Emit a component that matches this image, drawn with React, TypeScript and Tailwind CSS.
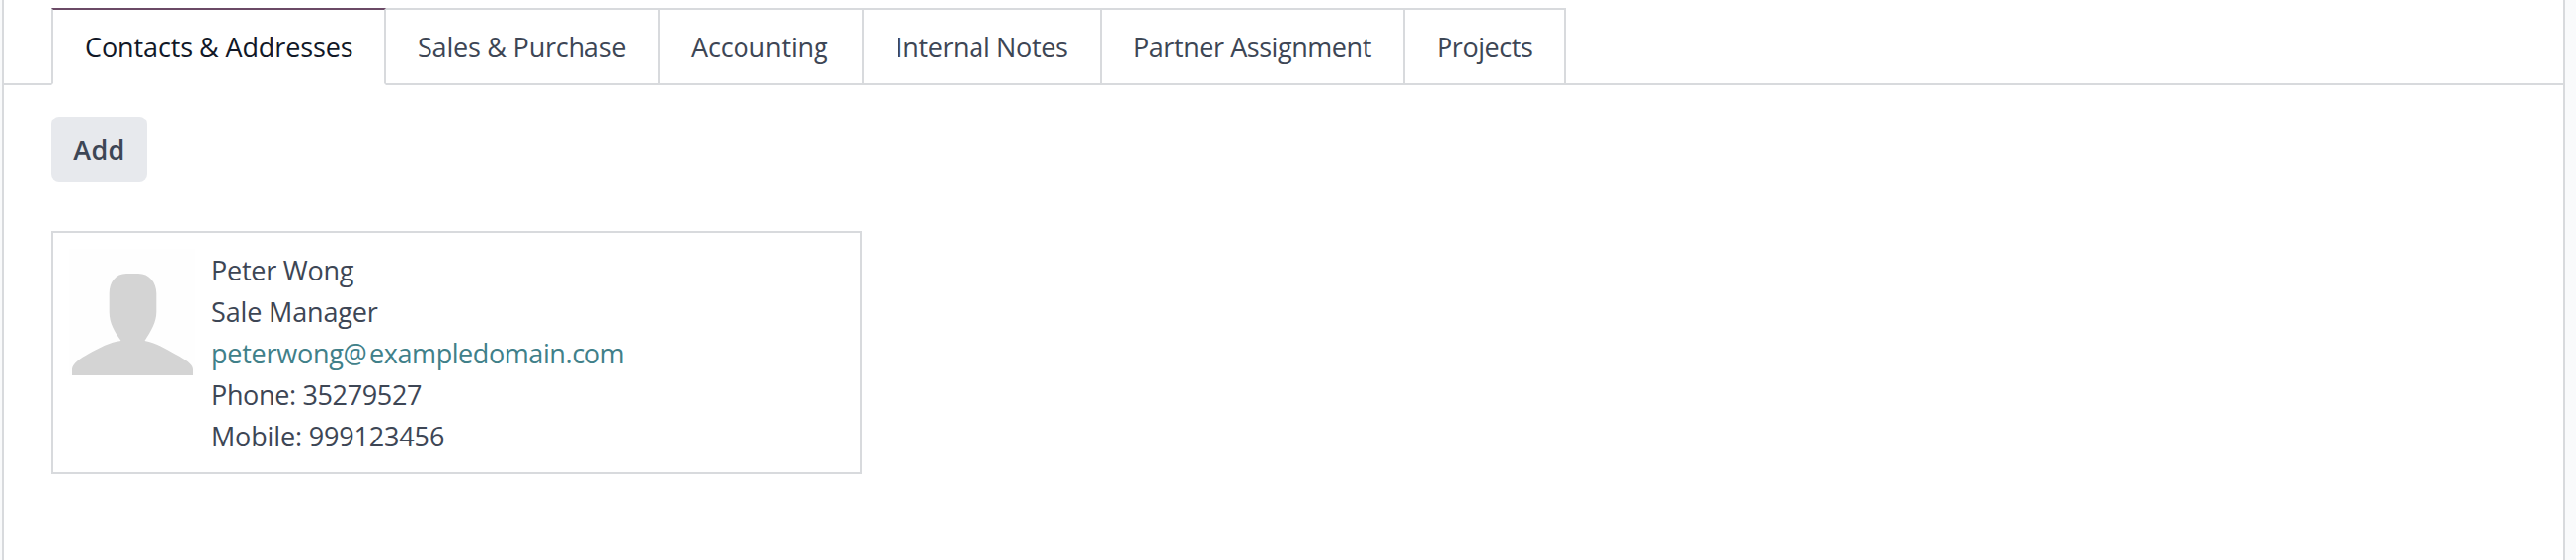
type Tab = { label: string; className: string; active?: boolean };

const tabs: Tab[] = [
  { label: "Contacts & Addresses", className: "w-[339px] tracking-[-0.1px]", active: true },
  { label: "Sales & Purchase", className: "w-[277px] tracking-[-0.216px]" },
  { label: "Accounting", className: "w-[207px] tracking-[-0.144px]" },
  { label: "Internal Notes", className: "w-[241px] tracking-[-0.359px]" },
  { label: "Partner Assignment", className: "w-[307px] tracking-[-0.443px]" },
  { label: "Projects", className: "w-[163px] tracking-[-0.45px]" },
];

function TabItem({ label, className, active }: Tab) {
  const tone = active
    ? "border-2 border-t-[#6b4a66] border-x-[#d8dadd] border-b-white bg-white text-[#111827]"
    : "border-y-2 border-r-2 border-[#d8dadd]";
  return (
    <button
      role="tab"
      aria-selected={!!active}
      className={`box-border h-[78px] shrink-0 whitespace-nowrap pt-0.5 pl-8 text-left ${tone} ${className}`}
    >
      {label}
    </button>
  );
}

function Avatar() {
  return (
    <svg className="h-32 w-32 shrink-0" viewBox="0 0 128 128" aria-hidden="true">
      <rect width="128" height="128" fill="#fefefe" />
      <path
        d="M58 25H70C81 25 88.3 34 88.3 45V64C88.3 74 83 83 76.5 93C88 95 97 101 108 107C117 112 125 116.500 125 122V128H3V122C3 116.500 11 111 20 106C31 100 41 94.500 52.500 93C46 84 40.700 75 40.700 64V45C40.700 34 47 25 58 25Z"
        fill="#d4d4d4"
      />
    </svg>
  );
}

function ContactCard() {
  return (
    <article className="flex h-[246px] w-[821px] gap-[16px] border-2 border-[#d8dadd] p-4">
      <Avatar />
      <div className="flex flex-col items-start whitespace-nowrap pt-px">
        <span className="tracking-[-0.25px]">Peter Wong</span>
        <span className="tracking-[-0.15px]">Sale Manager</span>
        <a className="tracking-[-0.253px] text-[#408089]">
          peterwong<span className="tracking-[2.2px]">@</span>
          <span className="tracking-[-0.42px]">exampledomain.com</span>
        </a>
        <span className="tracking-[-0.35px]">Phone: 35279527</span>
        <span className="tracking-[-0.16px]">Mobile: 999123456</span>
      </div>
    </article>
  );
}

export default function App() {
  return (
    <div className="flex h-[567px] w-full overflow-hidden bg-[#f9fafb] pl-0.5 font-['Open_Sans','Noto_Sans',sans-serif] text-[27px] leading-[42px] text-[#3d4655]">
      <main className="w-[2596px] border-x-2 border-[#d8dadd] bg-white pt-2">
        <div role="tablist" className="flex h-[78px]">
          <div className="w-12 border-b-2 border-[#d8dadd]" />
          {tabs.map((tab) => (
            <TabItem key={tab.label} {...tab} />
          ))}
          <div className="grow border-b-2 border-[#d8dadd]" />
        </div>
        <div className="flex flex-col items-start px-12 pt-8">
          <button className="mb-[50px] h-[66px] w-[97px] rounded-lg bg-[#e7e9ed] pt-0.5 text-center font-semibold tracking-[0.3px]">
            Add
          </button>
          <ContactCard />
        </div>
      </main>
    </div>
  );
}
